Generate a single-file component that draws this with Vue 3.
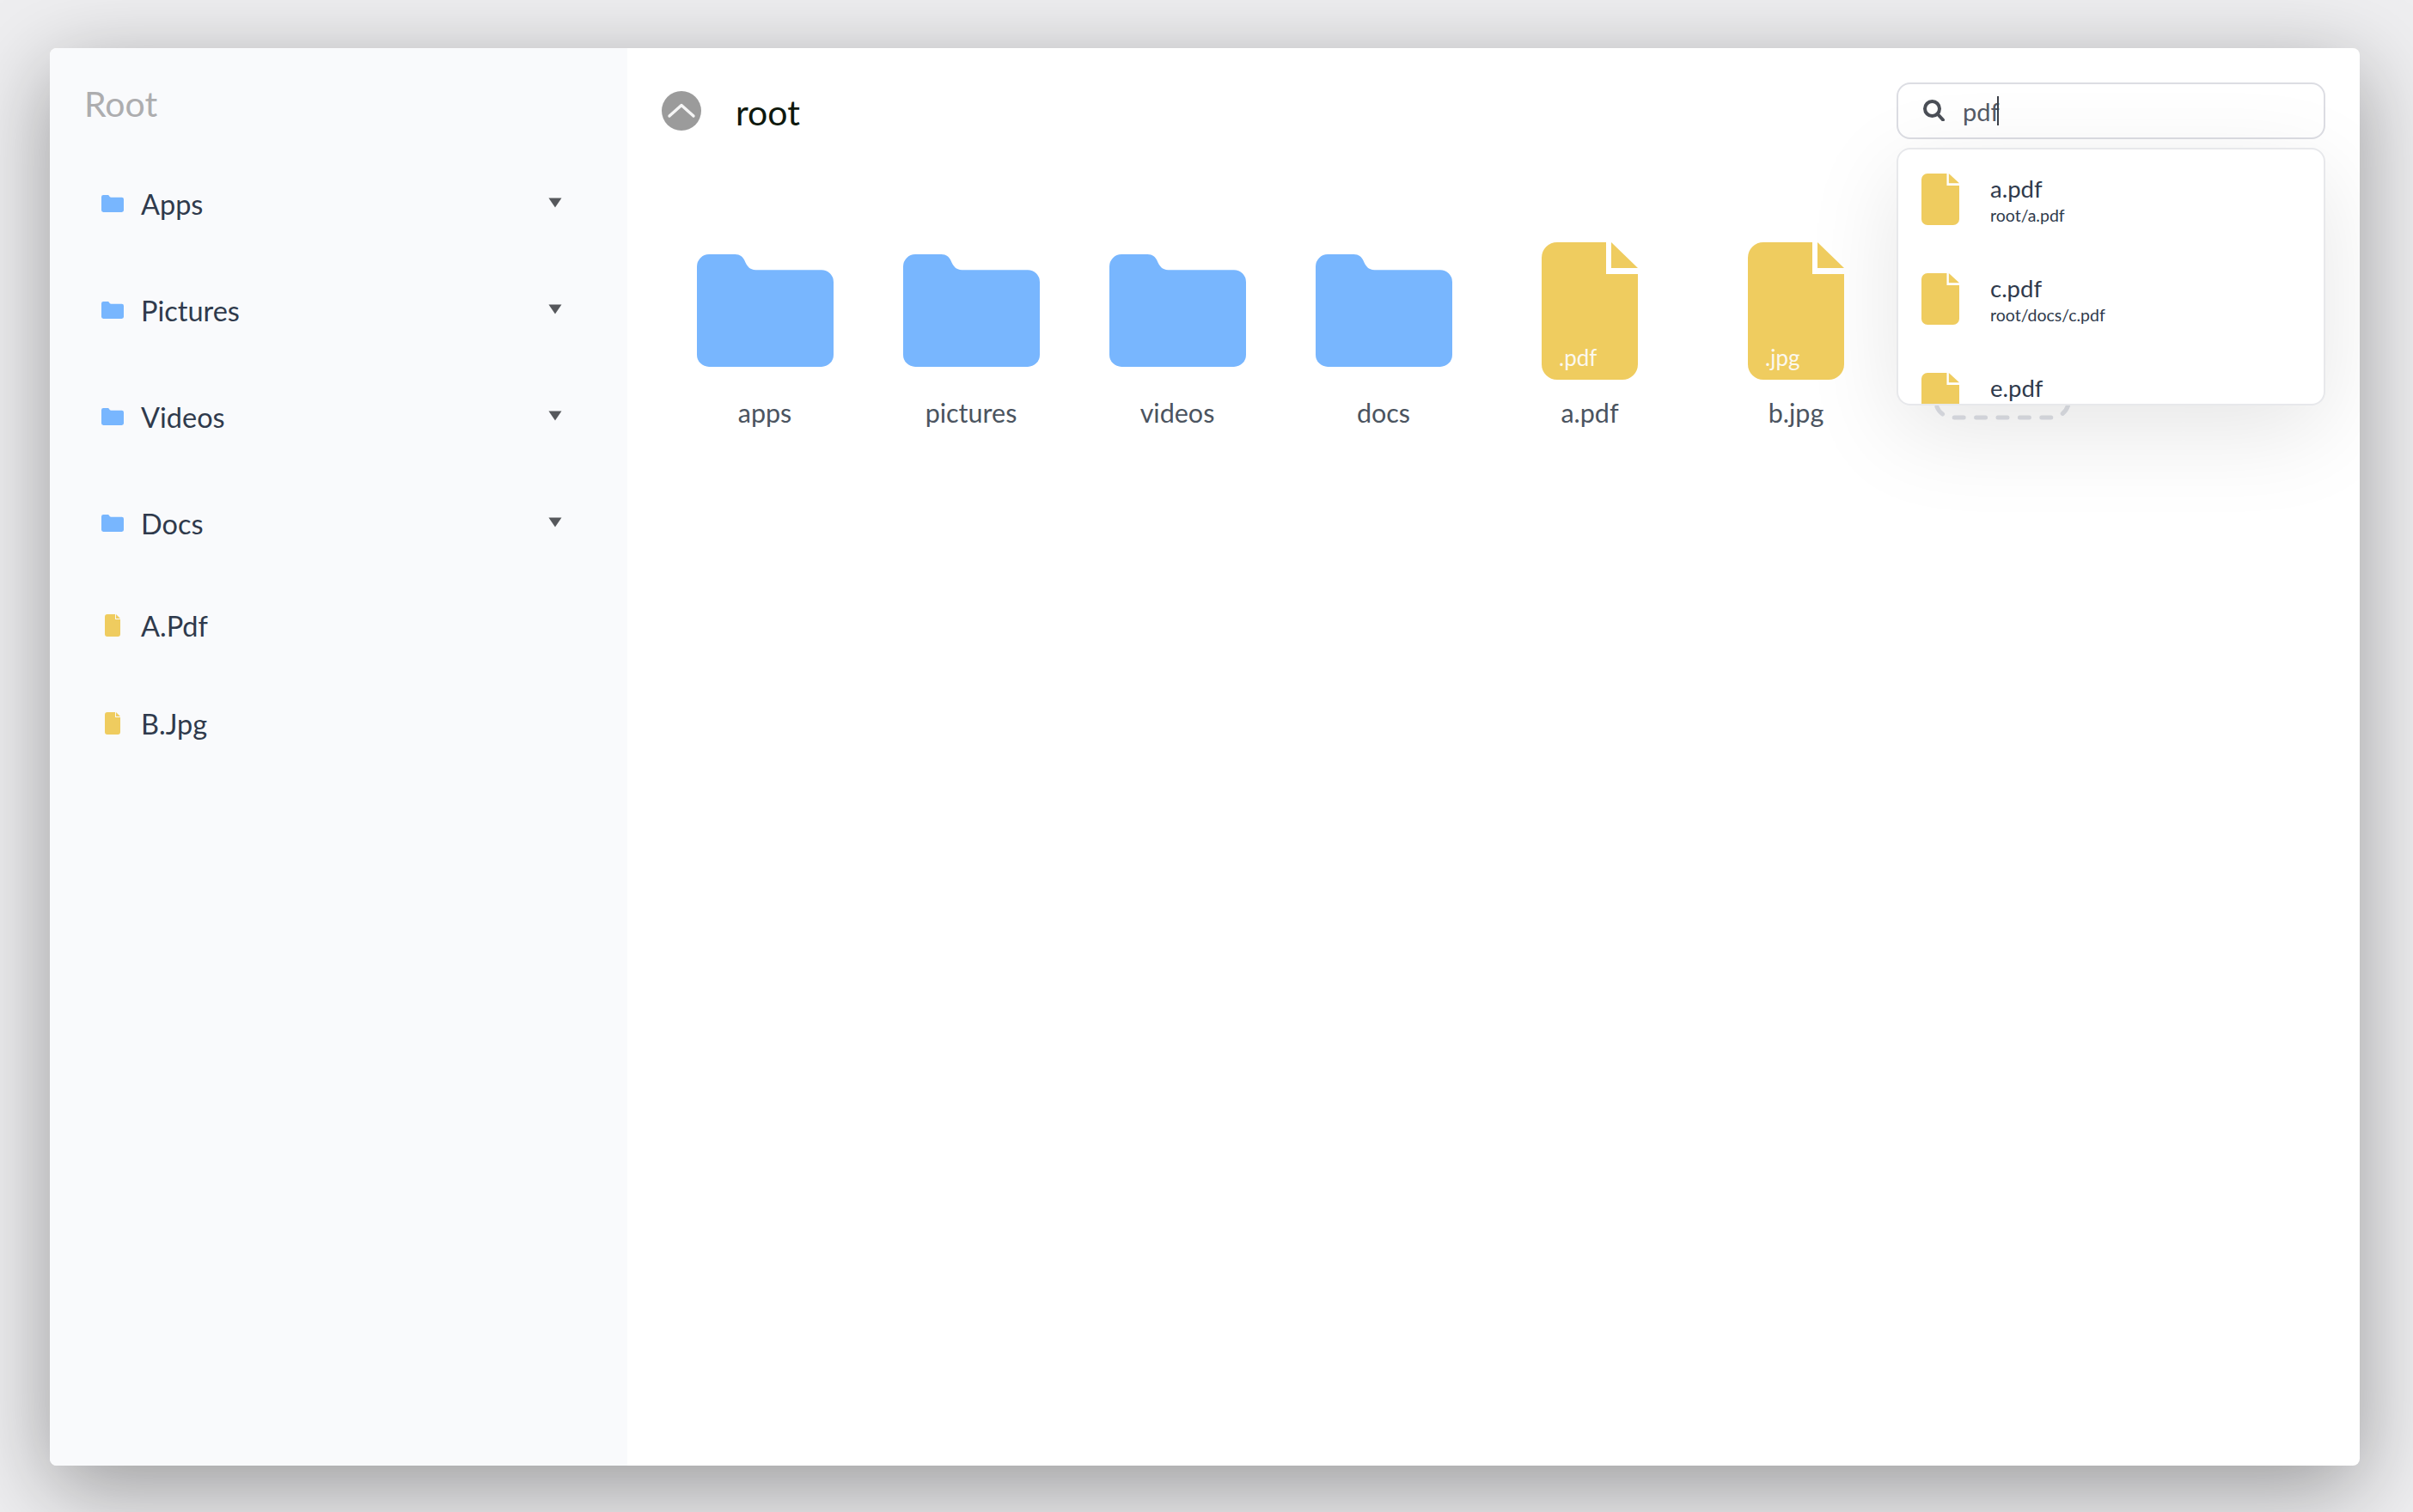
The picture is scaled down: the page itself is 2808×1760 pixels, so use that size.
<script setup>
const folderPath = 'M14 0H44C50 0 53 3 55 7C58 14 61 18 68 18H144A14 14 0 0 1 158 32V116A14 14 0 0 1 144 130H14A14 14 0 0 1 0 116V14A14 14 0 0 1 14 0Z'
const fileBody = 'M18 0H75V37H112V142A18 18 0 0 1 94 160H18A18 18 0 0 1 0 142V18A18 18 0 0 1 18 0Z'
const fileFold = 'M81 0L112 30H81Z'

const tree = [
  { name: 'Apps', type: 'folder' },
  { name: 'Pictures', type: 'folder' },
  { name: 'Videos', type: 'folder' },
  { name: 'Docs', type: 'folder' },
  { name: 'A.Pdf', type: 'file' },
  { name: 'B.Jpg', type: 'file' },
]
const entries = [
  { name: 'apps', type: 'folder' },
  { name: 'pictures', type: 'folder' },
  { name: 'videos', type: 'folder' },
  { name: 'docs', type: 'folder' },
  { name: 'a.pdf', type: 'file', ext: '.pdf' },
  { name: 'b.jpg', type: 'file', ext: '.jpg' },
]
const results = [
  { name: 'a.pdf', path: 'root/a.pdf' },
  { name: 'c.pdf', path: 'root/docs/c.pdf' },
  { name: 'e.pdf', path: '' },
]
</script>

<template>
  <div class="page">
    <div class="window">
      <aside class="sidebar">
        <div class="brand">Root</div>
        <ul class="tree">
          <li v-for="n in tree" :key="n.name" class="row" :class="n.type">
            <svg v-if="n.type === 'folder'" class="tree-folder" viewBox="0 0 158 130" preserveAspectRatio="none"><path :d="folderPath" /></svg>
            <svg v-else class="tree-file" viewBox="0 0 112 160" preserveAspectRatio="none"><path :d="fileBody" /><path :d="fileFold" /></svg>
            <span class="row-name">{{ n.name }}</span>
            <svg v-if="n.type === 'folder'" class="arrow" viewBox="0 0 16 12"><path d="M0.5 0.5H15.5L8 11.5Z" /></svg>
          </li>
        </ul>
      </aside>
      <main class="main">
        <header class="head">
          <button class="up" type="button">
            <svg viewBox="0 0 46 46"><path d="M9 29L23 16.5L37 29" /></svg>
          </button>
          <h1 class="crumb">root</h1>
          <div class="search">
            <svg class="lens" viewBox="0 0 26 26"><circle cx="11.5" cy="11.5" r="8.5" /><path d="M18 18L24 24.5" /></svg>
            <span class="query">pdf</span><i class="caret"></i>
            <div class="drop">
              <div v-for="r in results" :key="r.name" class="hit">
                <svg class="hit-file" viewBox="0 0 112 160" preserveAspectRatio="none"><path :d="fileBody" /><path :d="fileFold" /></svg>
                <div class="hit-text">
                  <div class="hit-name">{{ r.name }}</div>
                  <div v-if="r.path" class="hit-path">{{ r.path }}</div>
                </div>
              </div>
            </div>
          </div>
        </header>
        <section class="grid">
          <div v-for="e in entries" :key="e.name" class="entry">
            <div class="thumb">
              <svg v-if="e.type === 'folder'" class="big-folder" viewBox="0 0 158 130" preserveAspectRatio="none"><path :d="folderPath" /></svg>
              <div v-else class="big-file">
                <svg viewBox="0 0 112 160"><path :d="fileBody" /><path :d="fileFold" /></svg>
                <span class="ext">{{ e.ext }}</span>
              </div>
            </div>
            <div class="label">{{ e.name }}</div>
          </div>
          <div class="entry">
            <svg class="add" viewBox="0 0 160 208"><path d="M2.5 22.5V184A20 20 0 0 0 22.5 204H137.5A20 20 0 0 0 157.5 184V22.5A20 20 0 0 0 137.5 2.5H22.5A20 20 0 0 0 2.5 22.5Z" /></svg>
          </div>
        </section>
      </main>
    </div>
  </div>
</template>

<style>
html, body { margin: 0; background: #eeeef0; }
</style>

<style scoped>
.page {
  box-sizing: border-box;
  width: 2808px;
  height: 1760px;
  padding: 56px 62px 54px 58px;
  background: #eeeef0;
  font-family: Lato, "Liberation Sans", sans-serif;
  overflow: hidden;
}
.window {
  display: flex;
  height: 100%;
  border-radius: 8px;
  background: #fff;
  box-shadow: 0 26px 100px rgba(0, 0, 0, 0.36);
  overflow: hidden;
}
.sidebar {
  flex: none;
  width: 672px;
  background: #f9fafc;
}
.brand {
  height: 120px;
  padding-left: 40px;
  padding-top: 5px;
  box-sizing: border-box;
  line-height: 120px;
  font-size: 41px;
  color: #adadaf;
}
.tree {
  margin: 0;
  padding: 0 76px 0 60px;
  list-style: none;
}
.row {
  display: flex;
  align-items: center;
  height: 124px;
  font-size: 32.5px;
  line-height: 40px;
  color: #2f3a4c;
}
.row.file { height: 114px; }
.tree-folder { width: 26px; height: 20px; margin-right: 20px; margin-top: -3px; fill: #78b6fe; }
.tree-file { width: 18px; height: 26px; margin: -3px 24px 0 4px; fill: #efcc5f; }
.row-name { flex: 1; margin-top: -1px; }
.arrow { width: 16px; height: 12px; margin-top: -4px; fill: #56585c; }
.main {
  flex: 1;
  min-width: 0;
  padding: 40px 40px 0;
}
.head {
  display: flex;
  align-items: center;
  height: 66px;
}
.up {
  width: 46px;
  height: 46px;
  padding: 0;
  border: 0;
  border-radius: 50%;
  background: #9b9b9b;
}
.up svg { display: block; fill: none; stroke: #f6f6f6; stroke-width: 3.4; stroke-linecap: round; stroke-linejoin: round; }
.crumb {
  margin: 3px 0 0 40px;
  font-size: 41px;
  font-weight: 400;
  color: #0e180d;
}
.search {
  position: relative;
  box-sizing: border-box;
  display: flex;
  align-items: center;
  width: 499px;
  height: 66px;
  margin-left: auto;
  padding-left: 28px;
  border: 2px solid #dcdde3;
  border-radius: 16px;
  background: #fff;
}
.lens { width: 26px; height: 26px; margin: -2px 21px 0 0; fill: none; stroke: #4b4f57; stroke-width: 4; stroke-linecap: round; }
.query { font-size: 29px; color: #555b66; }
.caret { width: 2px; height: 34px; margin-left: -3px; background: #3c4048; }
.drop {
  position: absolute;
  top: 74px;
  left: -2px;
  right: -2px;
  box-sizing: border-box;
  display: flex;
  flex-direction: column;
  gap: 56px;
  height: 300px;
  padding: 28px 0 0 27px;
  border: 2px solid #e7e8eb;
  border-radius: 16px;
  background: #fff;
  box-shadow: 0 30px 110px rgba(0, 0, 0, 0.1);
  overflow: hidden;
}
.hit { display: flex; flex: none; align-items: flex-start; height: 60px; }
.hit-file { flex: none; width: 44px; height: 60px; margin-right: 36px; fill: #efcc5f; }
.hit-name { height: 35px; line-height: 35px; font-size: 27.5px; color: #2f3a4c; }
.hit-path { height: 26px; margin-top: 1px; line-height: 26px; font-size: 19.5px; color: #2f3a4c; }
.grid {
  display: flex;
  margin-top: 120px;
}
.entry {
  flex: none;
  display: flex;
  flex-direction: column;
  align-items: center;
  width: 240px;
}
.thumb {
  display: flex;
  align-items: center;
  justify-content: center;
  height: 160px;
}
.big-folder { width: 159px; height: 131px; margin-top: -2px; fill: #78b6fe; }
.big-file { position: relative; width: 112px; height: 160px; }
.big-file svg { display: block; width: 112px; height: 160px; fill: #efcc5f; }
.ext {
  position: absolute;
  left: 20px;
  bottom: 8px;
  font-size: 26px;
  line-height: 36px;
  color: #fbf8ef;
}
.label {
  height: 40px;
  margin-top: 18px;
  line-height: 40px;
  font-size: 30.5px;
  color: #4b5460;
}
.add {
  width: 160px;
  height: 208px;
  fill: none;
  stroke: #dee0e6;
  stroke-width: 5;
  stroke-dasharray: 11 14.4;
  stroke-dashoffset: 8.8;
  stroke-linecap: round;
}
</style>
